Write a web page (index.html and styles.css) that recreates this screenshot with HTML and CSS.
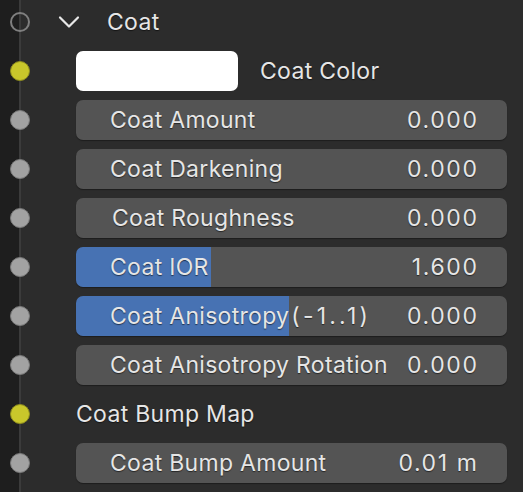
FILE: index.html
```html
<!DOCTYPE html>
<html>
<head>
<meta charset="utf-8">
<link rel="stylesheet" href="styles.css">
</head>
<body>
<div class="panel">
  <div class="row">
    <div class="sock"><span class="dot hollow"></span></div>
    <div class="content header">
      <svg class="chev" width="22" height="14" viewBox="0 0 22 14"><path d="M2 2.5 L11 11.5 L20 2.5" fill="none" stroke="#e8e8e8" stroke-width="2.2" stroke-linecap="round" stroke-linejoin="round"/></svg>
      <span class="htext">Coat</span>
    </div>
  </div>
  <div class="row">
    <div class="sock"><span class="dot yellow"></span></div>
    <div class="content color">
      <div class="swatch"></div>
      <span class="clabel">Coat Color</span>
    </div>
  </div>
  <div class="row">
    <div class="sock"><span class="dot gray"></span></div>
    <div class="content"><div class="field"><span class="lbl">Coat Amount</span><span class="val">0.000</span></div></div>
  </div>
  <div class="row">
    <div class="sock"><span class="dot gray"></span></div>
    <div class="content"><div class="field"><span class="lbl">Coat Darkening</span><span class="val">0.000</span></div></div>
  </div>
  <div class="row">
    <div class="sock"><span class="dot gray"></span></div>
    <div class="content"><div class="field"><span class="lbl lbl-r">Coat Roughness</span><span class="val">0.000</span></div></div>
  </div>
  <div class="row">
    <div class="sock"><span class="dot gray"></span></div>
    <div class="content"><div class="field slider" style="--fill: 135px"><span class="lbl">Coat IOR</span><span class="val">1.600</span></div></div>
  </div>
  <div class="row">
    <div class="sock"><span class="dot gray"></span></div>
    <div class="content"><div class="field slider" style="--fill: 213px"><span class="lbl">Coat Anisotropy<span class="range">(-1..1)</span></span><span class="val">0.000</span></div></div>
  </div>
  <div class="row">
    <div class="sock"><span class="dot gray"></span></div>
    <div class="content"><div class="field"><span class="lbl">Coat Anisotropy Rotation</span><span class="val">0.000</span></div></div>
  </div>
  <div class="row">
    <div class="sock"><span class="dot yellow"></span></div>
    <div class="content"><span class="plain">Coat Bump Map</span></div>
  </div>
  <div class="row">
    <div class="sock"><span class="dot gray"></span></div>
    <div class="content"><div class="field"><span class="lbl">Coat Bump Amount</span><span class="val">0.01 m</span></div></div>
  </div>
</div>
</body>
</html>
```
FILE: styles.css
```css
html, body {
  margin: 0;
  padding: 0;
}
body {
  width: 523px;
  height: 492px;
  overflow: hidden;
  background: linear-gradient(to right, #1e1e1e 0, #1e1e1e 19px, #3b3b3b 19px, #3b3b3b 21px, #2c2c2c 21px);
  font-family: "Inter", "DejaVu Sans", sans-serif;
  font-size: 23px;
  letter-spacing: 0.3px;
  color: #e6e6e6;
}
.panel {
  margin-top: -3px;
  display: flex;
  flex-direction: column;
}
.row {
  height: 49px;
  display: grid;
  grid-template-columns: 40px 1fr;
  align-items: center;
}
.sock {
  display: flex;
  justify-content: center;
  align-items: center;
}
.dot {
  width: 20px;
  height: 20px;
  border-radius: 50%;
  box-sizing: border-box;
  display: block;
}
.dot.hollow {
  border: 2px solid #7f7f7f;
  background: transparent;
}
.dot.gray {
  background: #a2a2a2;
  border: 1px solid #7a7a7a;
}
.dot.yellow {
  background: #c9c72b;
  border: 1px solid #8f8d1e;
}
.content {
  padding-left: 36px;
  padding-right: 16px;
  display: flex;
  align-items: center;
  text-shadow: 0 1px 1px rgba(0,0,0,0.55);
}
.header .chev {
  margin-left: -18px;
}
.htext {
  margin-left: 27px;
}
.swatch {
  width: 162px;
  height: 40px;
  background: #ffffff;
  border-radius: 7px;
}
.clabel {
  margin-left: 22px;
}
.field {
  flex: 1;
  height: 40px;
  border-radius: 7px;
  background: #545454;
  box-shadow: 0 1px 1px rgba(0,0,0,0.35);
  display: flex;
  align-items: center;
  justify-content: space-between;
  padding: 0 28.5px 0 34px;
}
.field.slider {
  background: linear-gradient(to right, #4772b3 0, #4772b3 var(--fill), #545454 var(--fill));
}
.lbl-r {
  margin-left: 2px;
}
.val {
  letter-spacing: 1.6px;
}
.range {
  letter-spacing: 3.2px;
  margin-left: 2px;
}
.plain {
  margin-left: 0;
}
```
